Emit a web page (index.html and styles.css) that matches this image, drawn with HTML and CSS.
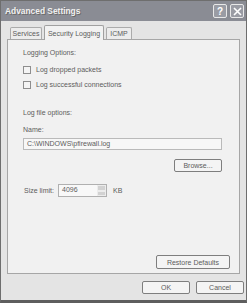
FILE: index.html
```html
<!DOCTYPE html>
<html>
<head>
<meta charset="utf-8">
<link rel="stylesheet" href="styles.css">
</head>
<body>
<div class="window">
  <div class="titlebar">
    <span class="title">Advanced Settings</span>
    <div class="tbtns">
      <span class="tbtn">?</span>
      <span class="tbtn">
        <svg width="9" height="9" viewBox="0 0 9 9"><path d="M1 1L8 8M8 1L1 8" stroke="#fff" stroke-width="1.6"/></svg>
      </span>
    </div>
  </div>
  <div class="client">
    <div class="tabs">
      <span class="tab t1">Services</span>
      <span class="tab t2 active">Security Logging</span>
      <span class="tab t3">ICMP</span>
    </div>
    <div class="panel">
      <div class="label first">Logging Options:</div>
      <div class="check c1"><span class="box"></span><span>Log dropped packets</span></div>
      <div class="check c2"><span class="box"></span><span>Log successful connections</span></div>
      <div class="label second">Log file options:</div>
      <div class="label name">Name:</div>
      <div class="field">C:\WINDOWS\pfirewall.log</div>
      <div class="browse-row"><span class="btn browse">Browse...</span></div>
      <div class="size-row">
        <span class="slabel">Size limit:</span>
        <span class="num"><span class="numtxt">4096</span><span class="spin"><span class="up"></span><span class="dn"></span></span></span>
        <span class="kb">KB</span>
      </div>
      <div class="spacer"></div>
      <div class="restore-row"><span class="btn restore">Restore Defaults</span></div>
    </div>
    <div class="footer">
      <span class="btn ok">OK</span>
      <span class="btn cancel">Cancel</span>
    </div>
  </div>
</div>
</body>
</html>
```
FILE: styles.css
```css
html, body {
  margin: 0;
  padding: 0;
  background: #dcdcdc;
}
body {
  font-family: "Liberation Sans", Arial, sans-serif;
  font-size: 7px;
  color: #5c5c5c;
}
.window {
  width: 247px;
  height: 303px;
  box-sizing: border-box;
  border: 1px solid #6e6e6e;
  border-bottom: 3px solid #5e5e5e;
  background: #e4e4e4;
  display: flex;
  flex-direction: column;
}
.titlebar {
  height: 20px;
  background: #8a8c94;
  display: flex;
  align-items: center;
  justify-content: space-between;
  padding-left: 4px;
  flex: none;
}
.title {
  color: #f0f0f0;
  font-weight: bold;
  font-size: 8.4px;
  text-shadow: 1px 1px 0 #6a6a6a;
}
.tbtns {
  display: flex;
  gap: 3px;
  margin-right: 2px;
}
.tbtn {
  width: 14px;
  height: 14px;
  box-sizing: border-box;
  border: 1px solid #e8e8e8;
  border-radius: 2px;
  background: #9a9ca4;
  color: #fff;
  font-weight: bold;
  font-size: 10px;
  display: flex;
  align-items: center;
  justify-content: center;
}
.client {
  flex: 1;
  display: flex;
  flex-direction: column;
  padding: 4px 6px 0 6px;
}
.tabs {
  display: flex;
  align-items: flex-end;
  height: 14px;
  padding-left: 3px;
  position: relative;
  z-index: 1;
}
.tab {
  height: 12px;
  box-sizing: border-box;
  border: 1px solid #ababab;
  border-bottom: none;
  background: #ececec;
  display: flex;
  align-items: center;
  justify-content: center;
  border-radius: 2px 2px 0 0;
}
.t1 { width: 32px; }
.t2 { width: 60px; margin-left: 2px; }
.t3 { width: 26px; margin-left: 2px; }
.tab.active {
  height: 15px;
  margin-bottom: -1px;
  background: #f2f2f2;
  border-color: #a0a0a0;
}
.panel {
  height: 235px;
  box-sizing: border-box;
  border: 1px solid #a6a6a6;
  background: #f1f1f1;
  display: flex;
  flex-direction: column;
  padding-left: 15px;
  padding-right: 17px;
}
.label {
  height: 8px;
  line-height: 8px;
}
.first { margin-top: 9px; }
.check {
  display: flex;
  align-items: center;
  height: 8px;
  line-height: 8px;
}
.c1 { margin-top: 9px; }
.c2 { margin-top: 7px; }
.box {
  width: 8px;
  height: 8px;
  box-sizing: border-box;
  border: 1px solid #8e8e8e;
  background: #f4f4f4;
  margin-right: 5px;
}
.second { margin-top: 20px; }
.name { margin-top: 9px; }
.field {
  margin-top: 4px;
  height: 12px;
  box-sizing: border-box;
  border: 1px solid #bababa;
  background: #f7f7f7;
  padding-left: 3px;
  line-height: 10px;
}
.browse-row {
  display: flex;
  justify-content: flex-end;
  margin-top: 9px;
}
.btn {
  box-sizing: border-box;
  border: 1px solid #7e7e7e;
  border-radius: 2px;
  background: #f4f4f4;
  display: flex;
  align-items: center;
  justify-content: center;
  height: 13px;
}
.browse { width: 48px; }
.size-row {
  display: flex;
  align-items: center;
  margin-top: 12px;
  height: 13px;
  padding-left: 1px;
}
.slabel { width: 34px; }
.num {
  width: 49px;
  height: 13px;
  box-sizing: border-box;
  border: 1px solid #b0b0b0;
  background: #f8f8f8;
  display: flex;
  justify-content: space-between;
  padding-left: 3px;
  line-height: 10px;
}
.spin {
  width: 9px;
  display: flex;
  flex-direction: column;
}
.spin span {
  flex: 1;
  background: #d2d2d2;
  border: 1px solid #ececec;
}
.kb { margin-left: 6px; }
.spacer { flex: 1; }
.restore-row {
  display: flex;
  justify-content: flex-end;
  margin-right: -8px;
  margin-bottom: 4px;
}
.restore { width: 74px; height: 14px; }
.footer {
  display: flex;
  justify-content: flex-end;
  gap: 6px;
  margin-top: 7px;
  margin-right: -4px;
}
.ok, .cancel { width: 48px; height: 13px; }
```
